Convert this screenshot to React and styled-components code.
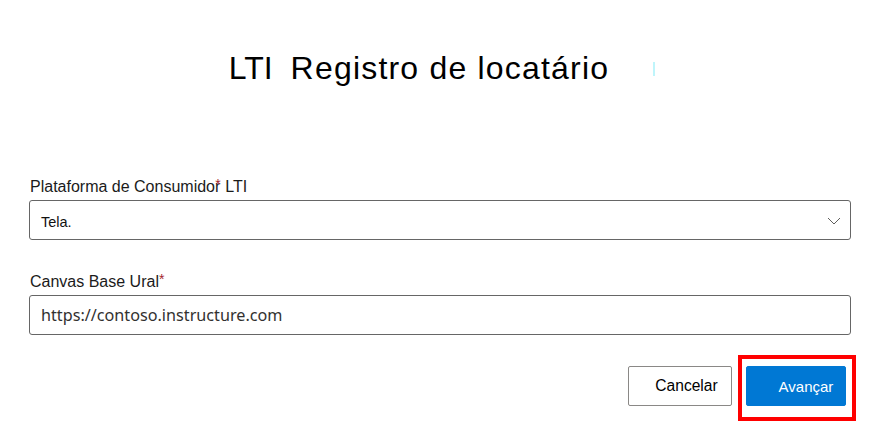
import React from 'react'
import styled, { createGlobalStyle } from 'styled-components'

const Global = createGlobalStyle`
body {
  margin: 0;
  background: #fff;
  font-family: Arial, "Liberation Sans", sans-serif;
}
`

const Page = styled.div`
width: 880px;
height: 438px;
display: flex;
flex-direction: column;
box-sizing: border-box;
padding: 0 29px;
`

const Title = styled.h1`
margin: 48px 0 0;
display: flex;
justify-content: center;
align-items: center;
gap: 18px;
font-family: "Liberation Sans", Arial, sans-serif;
font-weight: 400;
font-size: 32px;
line-height: 40px;
color: #000;
padding-left: 4px;
`

const Wide = styled.span`
letter-spacing: 1.2px;
`

const Mark = styled.span`
width: 2px;
height: 14px;
background: #bff5fb;
margin-left: 26px;
margin-top: 2px;
`

const Field = styled.div`
display: flex;
flex-direction: column;
margin-top: ${({ $top }) => $top}px;
`

const Label = styled.label`
font-family: "Liberation Sans", Arial, sans-serif;
font-size: 16px;
line-height: 18px;
color: #1b1b1b;
margin: 0 0 4px 1px;
`

const Star = styled.span`
color: #a4262c;
margin-left: ${({ $tuck }) => ($tuck ? '-5px' : '0')};
position: relative;
top: -3px;
font-size: 14px;
`

const Box = styled.div`
height: 40px;
box-sizing: border-box;
border: 1px solid #666;
border-radius: 3px;
display: flex;
align-items: center;
justify-content: space-between;
padding: 0 11px;
`

const SelectText = styled.span`
font-family: "Liberation Sans", Arial, sans-serif;
font-size: 14.5px;
color: #111;
padding-top: 4px;
`

const InputText = styled.span`
font-family: "Noto Sans", "Open Sans", sans-serif;
font-size: 16.2px;
color: #323130;
`

const Footer = styled.div`
display: flex;
justify-content: flex-end;
align-items: flex-start;
gap: 6px;
margin-top: 20px;
margin-right: -5px;
`

const Button = styled.button`
height: 40px;
box-sizing: border-box;
border-radius: 2px;
font-family: "Liberation Sans", Arial, sans-serif;
font-size: ${({ $primary }) => ($primary ? '15px' : '15.6px')};
cursor: pointer;
border: 1px solid ${({ $primary }) => ($primary ? '#0078d4' : '#8a8886')};
background: ${({ $primary }) => ($primary ? '#0078d4' : '#fff')};
color: ${({ $primary }) => ($primary ? '#fff' : '#000')};
width: ${({ $w }) => $w}px;
margin-top: 11px;
padding: ${({ $primary }) => ($primary ? '0 0 0 20px' : '0 0 0 13px')};
`

const Highlight = styled.div`
border: 4px solid #f00;
padding: 4px 6px 11px 4px;
& > button {
  margin-top: 3px;
  display: block;
}
`

function Chevron() {
  return (
    <svg width="14" height="8" viewBox="0 0 14 8" style={{ marginRight: -2, marginTop: 2 }}>
      <path d="M1 1 L7 7 L13 1" fill="none" stroke="#605e5c" strokeWidth="1" />
    </svg>
  )
}

export default function App() {
  return (
    <Page>
      <Global />
      <Title>
        <span>LTI</span>
        <Wide>Registro de locatário</Wide>
        <Mark />
      </Title>
      <Field $top={90}>
        <Label>
          Plataforma de Consumidor<Star $tuck>*</Star> LTI
        </Label>
        <Box>
          <SelectText>Tela.</SelectText>
          <Chevron />
        </Box>
      </Field>
      <Field $top={33}>
        <Label>
          Canvas Base Ural<Star>*</Star>
        </Label>
        <Box>
          <InputText>https://contoso.instructure.com</InputText>
        </Box>
      </Field>
      <Footer>
        <Button $w={104}>Cancelar</Button>
        <Highlight>
          <Button $primary $w={100}>Avançar</Button>
        </Highlight>
      </Footer>
    </Page>
  )
}
